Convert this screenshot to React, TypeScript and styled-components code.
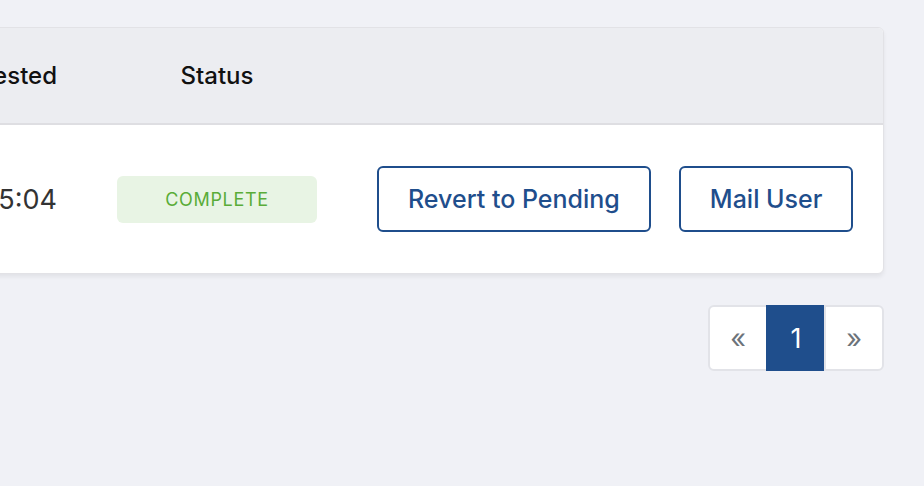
import React from "react";
import styled, { createGlobalStyle } from "styled-components";

const GlobalStyle = createGlobalStyle`
    html, body {
        margin: 0;
        padding: 0;
        background: #f0f1f6;
        font-family: Inter, "Noto Sans", sans-serif;
        overflow: hidden;
    }
`;

interface Request {
    id: number;
    requested: string;
    status: string;
}

const requests: Request[] = [{ id: 1, requested: "2023-04-12 14:35:04", status: "Complete" }];

export default function App() {
    return (
        <>
            <GlobalStyle />
            <Page>
                <Card>
                    <HeaderRow>
                        <HeadCell align="end">Requested</HeadCell>
                        <HeadCell align="center">Status</HeadCell>
                        <HeadCell />
                    </HeaderRow>
                    {requests.map((r) => (
                        <BodyRow key={r.id}>
                            <Cell align="end">{r.requested}</Cell>
                            <Cell align="center">
                                <Badge>{r.status}</Badge>
                            </Cell>
                            <Actions>
                                <OutlineButton>Revert to Pending</OutlineButton>
                                <OutlineButton>Mail User</OutlineButton>
                            </Actions>
                        </BodyRow>
                    ))}
                </Card>
                <Pagination>
                    <PageLink>«</PageLink>
                    <PageLink active>1</PageLink>
                    <PageLink>»</PageLink>
                </Pagination>
            </Page>
        </>
    );
}

const Page = styled.div`
    padding: 27px 40px 0 0;
`;

const Card = styled.div`
    margin-left: -400px;
    background: #fff;
    border: 1px solid #e2e2e6;
    border-radius: 6px;
    box-shadow: 0 3px 4px rgba(0, 0, 0, 0.06);
    overflow: hidden;
`;

const Row = styled.div`
    display: grid;
    grid-template-columns: 1fr 200px 475px;
    column-gap: 60px;
    align-items: center;
    padding-right: 31px;
`;

const HeaderRow = styled(Row)`
    height: 95px;
    background: #ecedf1;
    border-bottom: 2px solid #dedee2;
`;

const BodyRow = styled(Row)`
    height: 148px;
`;

const HeadCell = styled.div<{ align?: "end" | "center" }>`
    justify-self: ${({ align }) => align ?? "start"};
    font-size: 24px;
    font-weight: 500;
    color: #111;
`;

const Cell = styled.div<{ align?: "end" | "center" }>`
    justify-self: ${({ align }) => align ?? "start"};
    display: flex;
    font-size: 27px;
    color: #333;
    white-space: nowrap;
    width: ${({ align }) => (align === "center" ? "100%" : "auto")};
`;

const Badge = styled.span`
    flex: 1;
    height: 47px;
    display: flex;
    align-items: center;
    justify-content: center;
    background: #e8f4e4;
    color: #5aac38;
    border-radius: 6px;
    font-size: 18px;
    text-transform: uppercase;
    letter-spacing: 0.7px;
`;

const Actions = styled.div`
    display: flex;
    gap: 28px;
`;

const OutlineButton = styled.button`
    height: 66px;
    padding: 0 29px;
    background: #fff;
    border: 2px solid #1f4e8c;
    border-radius: 6px;
    color: #1f4e8c;
    font-family: Inter, "Noto Sans", sans-serif;
    font-size: 25px;
    font-weight: 500;
    white-space: nowrap;
`;

const Pagination = styled.div`
    display: flex;
    justify-content: flex-end;
    margin-top: 31px;
`;

const PageLink = styled.span<{ active?: boolean }>`
    box-sizing: border-box;
    width: 60px;
    height: 66px;
    display: flex;
    align-items: center;
    justify-content: center;
    font-size: 27px;
    color: ${({ active }) => (active ? "#fff" : "#6c737a")};
    background: ${({ active }) => (active ? "#1f4e8c" : "#fff")};
    border: 2px solid ${({ active }) => (active ? "#1f4e8c" : "#e2e3e8")};
    &:not(:first-child) {
        margin-left: -2px;
    }
    &:first-child {
        border-radius: 6px 0 0 6px;
    }
    &:last-child {
        border-radius: 0 6px 6px 0;
    }
`;
